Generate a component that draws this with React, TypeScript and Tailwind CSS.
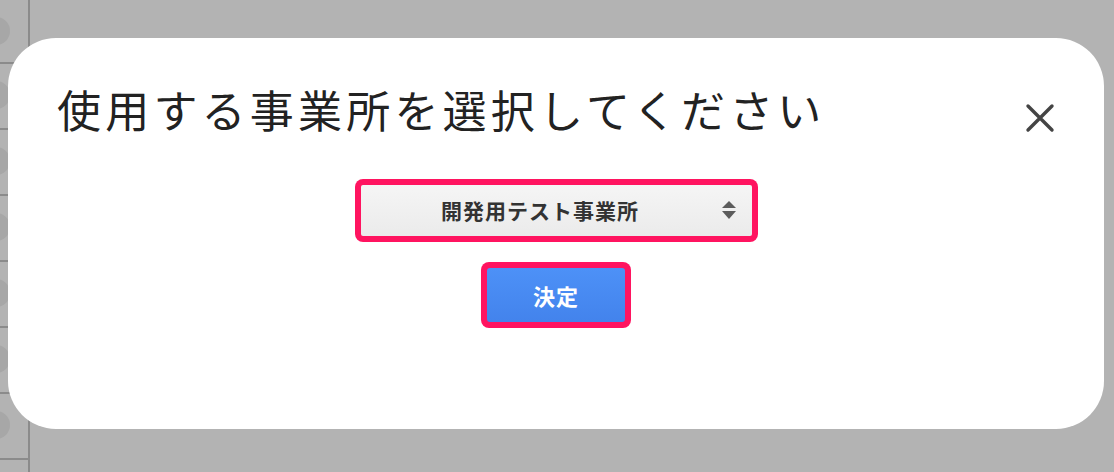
import React from "react";

const rows = [0, 1, 2, 3, 4, 5, 6, 7];

function CloseIcon() {
  return (
    <svg width="30" height="30" viewBox="0 0 30 30" fill="none">
      <path
        d="M3 3 L27 27 M27 3 L3 27"
        stroke="#444444"
        strokeWidth="3.4"
        strokeLinecap="round"
      />
    </svg>
  );
}

function SelectArrows() {
  return (
    <svg width="16" height="20" viewBox="0 0 16 20">
      <path d="M8 1 L15 8 L1 8 Z" fill="#5c5c5c" />
      <path d="M1 11 L15 11 L8 19 Z" fill="#5c5c5c" />
    </svg>
  );
}

export default function App() {
  return (
    <div
      className="relative h-[472px] w-[1114px] overflow-hidden bg-[#b3b3b3]"
      style={{ fontFamily: '"Noto Sans CJK JP", "Noto Sans", sans-serif' }}
    >
      {/* background table strip */}
      <div className="flex h-full w-[30px] flex-col border-r-2 border-[#8b8b8b]">
        {rows.map((r) => (
          <div
            key={r}
            className="relative h-[66px] shrink-0 border-b-2 border-[#8b8b8b] first:h-[64px]"
          >
            <div className="absolute left-[-18px] top-[17px] size-[28px] rounded-full bg-[#a7a7a7]" />
          </div>
        ))}
      </div>

      {/* modal */}
      <div className="absolute left-[8px] top-[38px] flex h-[391px] w-[1096px] flex-col rounded-[48px] bg-white">
        <div className="flex items-start justify-between pl-[49px] pr-[49px] pt-[45px]">
          <h1 className="text-[44px] leading-[52px] font-normal tracking-[4.2px] text-[#222222]">
            使用する事業所を選択してください
          </h1>
          <button className="mt-[20px]">
            <CloseIcon />
          </button>
        </div>

        <div className="mt-[44px] flex flex-col items-center gap-[20px]">
          <div className="rounded-[8px] bg-[#ff1460] p-[6px]">
            <div className="relative flex h-[51px] w-[391px] items-center justify-center rounded-[2px] bg-gradient-to-b from-[#f5f5f5] to-[#ebebeb] pr-[32px]">
              <span className="text-[21px] font-bold tracking-[1px] text-[#333333]">
                開発用テスト事業所
              </span>
              <span className="absolute right-[15px] top-[15px]">
                <SelectArrows />
              </span>
            </div>
          </div>

          <div className="rounded-[8px] bg-[#ff1460] p-[6px]">
            <button className="flex h-[54px] w-[138px] items-center justify-center rounded-[3px] bg-gradient-to-b from-[#4d91f7] to-[#4383ec] text-[22px] font-bold tracking-[1px] text-white">
              決定
            </button>
          </div>
        </div>
      </div>
    </div>
  );
}
